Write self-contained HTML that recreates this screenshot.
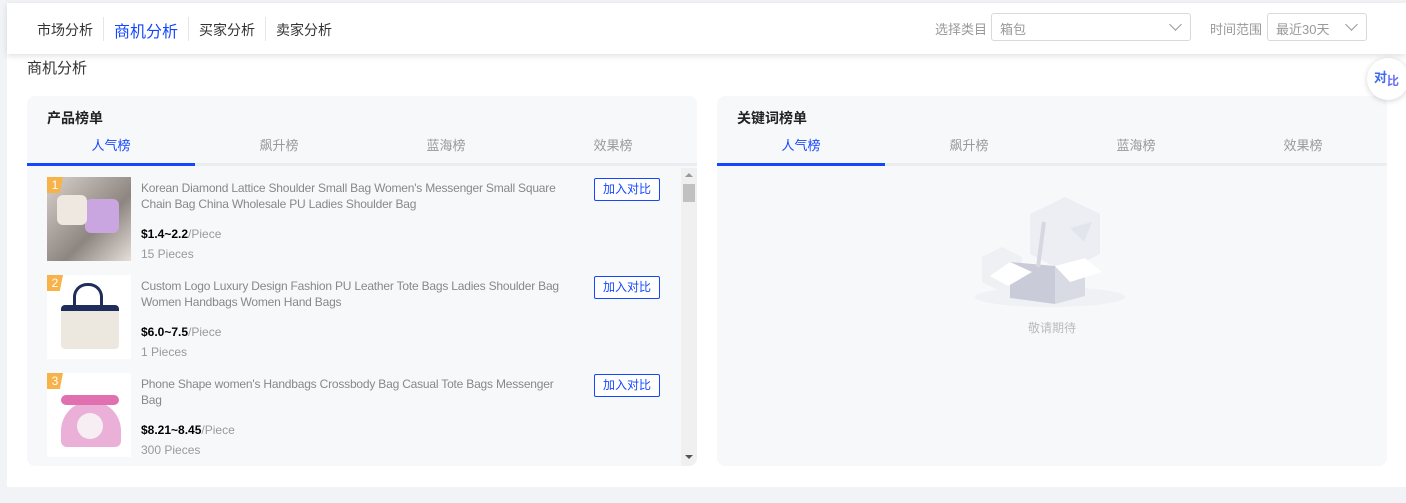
<!DOCTYPE html>
<html><head><meta charset="utf-8"><style>
*{margin:0;padding:0;box-sizing:border-box}
body{width:1406px;height:503px;background:#f2f3f6;font-family:"Liberation Sans","Noto Sans CJK SC",sans-serif;position:relative;overflow:hidden;color:#333}
.abs{position:absolute}
.hdr{left:7px;top:3px;width:1399px;height:51px;background:#fff;box-shadow:0 2px 6px rgba(0,0,0,.12);z-index:2}
.main{left:7px;top:54px;width:1399px;height:433px;background:#fff}
.nav{font-size:14px;color:#333;top:17px}
.sep{width:1px;height:24px;background:#e6e6e6;top:14px}
.lbl{font-size:13px;color:#999;top:16px}
.sel{top:10px;height:28px;border:1px solid #d9d9d9;border-radius:3px;font-size:13px;color:#999;padding:5px 8px;background:#fff}
.chev{position:absolute;right:10px;top:6px;width:9px;height:9px;border-right:1px solid #999;border-bottom:1px solid #999;transform:rotate(45deg)}
.panel{top:96px;width:670px;height:370px;background:#f7f8fa;border-radius:8px;overflow:hidden}
.ptitle{left:20px;top:12px;font-size:14px;font-weight:bold;color:#222}
.tab{top:39px;width:168px;text-align:center;font-size:13px;color:#999}
.tline{left:0;top:67px;width:100%;height:3px;background:#ecedf0}
.tact{left:0;top:67px;width:168px;height:3px;background:#1447ff}
.item{left:20px;width:640px;height:98px}
.img{left:0;top:0;width:84px;height:84px;background:#fff;overflow:hidden}
.rank{left:0;top:0;width:16px;height:16px;background:#f7b24a;color:#fff;font-size:12px;text-align:center;line-height:16px;clip-path:polygon(0 0,100% 0,80% 100%,0 100%)}
.t{left:94px;top:3px;width:425px;font-size:12px;line-height:16px;color:#888;letter-spacing:-0.2px}
.pr{left:94px;top:50px;font-size:12px;color:#000}
.pr span{color:#999}
.pc{left:94px;top:70px;font-size:12px;color:#999}
.btn{left:547px;top:1px;width:66px;height:23px;border:1px solid #1447ff;border-radius:2px;font-size:12px;color:#1447ff;text-align:center;line-height:21px;background:#fff}
</style></head><body>
<div class="abs hdr">
 <div class="abs nav" style="left:30px">市场分析</div>
 <div class="abs sep" style="left:96px"></div>
 <div class="abs nav" style="left:107px;top:15px;font-size:16px;color:#1447ff">商机分析</div>
 <div class="abs sep" style="left:181px"></div>
 <div class="abs nav" style="left:192px">买家分析</div>
 <div class="abs sep" style="left:258px"></div>
 <div class="abs nav" style="left:269px">卖家分析</div>
 <div class="abs lbl" style="left:928px">选择类目</div>
 <div class="abs sel" style="left:984px;width:200px">箱包<i class="chev"></i></div>
 <div class="abs lbl" style="left:1203px">时间范围</div>
 <div class="abs sel" style="left:1260px;width:100px">最近30天<i class="chev"></i></div>
</div>
<div class="abs main"></div>
<div class="abs" style="left:27px;top:57px;font-size:15px;color:#333">商机分析</div>
<div class="abs" style="left:1367px;top:58px;width:42px;height:42px;border-radius:50%;background:#fff;box-shadow:0 1px 6px rgba(0,0,0,.18);z-index:3;font-size:13px;font-weight:bold;color:#3d6bf0;padding:9px 0 0 7px">对<span style="font-size:12px;color:#6a6ff0;position:relative;top:3px">比</span></div>

<div class="abs panel" style="left:27px">
 <div class="abs ptitle">产品榜单</div>
 <div class="abs tab" style="left:0;color:#1447ff">人气榜</div>
 <div class="abs tab" style="left:168px">飙升榜</div>
 <div class="abs tab" style="left:335px">蓝海榜</div>
 <div class="abs tab" style="left:502px">效果榜</div>
 <div class="abs tline"></div><div class="abs tact"></div>
 <div class="abs" style="left:654px;top:72px;width:16px;height:298px;background:#f0f0f0"></div>
 <div class="abs" style="left:656px;top:88px;width:12px;height:18px;background:#c1c1c1"></div>
 <div class="abs" style="left:658px;top:77px;border:4px solid transparent;border-bottom-color:#999;border-top:0"></div>
 <div class="abs" style="left:658px;top:359px;border:4px solid transparent;border-top-color:#555;border-bottom:0"></div>

 <div class="abs item" style="top:81px">
  <div class="abs img" style="background:linear-gradient(135deg,#d9d2cc,#8d8580 60%,#e6dfd9)"><div class="abs" style="left:38px;top:22px;width:34px;height:34px;background:#c9a6e0;border-radius:6px"></div><div class="abs" style="left:10px;top:18px;width:30px;height:30px;background:#eee8e0;border-radius:6px"></div></div>
  <div class="abs rank">1</div>
  <div class="abs t">Korean Diamond Lattice Shoulder Small Bag Women's Messenger Small Square Chain Bag China Wholesale PU Ladies Shoulder Bag</div>
  <div class="abs pr"><b>$1.4~2.2</b><span>/Piece</span></div>
  <div class="abs pc">15 Pieces</div>
  <div class="abs btn">加入对比</div>
 </div>
 <div class="abs item" style="top:179px">
  <div class="abs img"><div class="abs" style="left:14px;top:30px;width:58px;height:44px;background:#ece8e0;border-radius:4px;border-top:6px solid #1f2d5a"></div><div class="abs" style="left:26px;top:8px;width:30px;height:26px;border:3px solid #1f2d5a;border-bottom:0;border-radius:14px 14px 0 0"></div></div>
  <div class="abs rank">2</div>
  <div class="abs t">Custom Logo Luxury Design Fashion PU Leather Tote Bags Ladies Shoulder Bag Women Handbags Women Hand Bags</div>
  <div class="abs pr"><b>$6.0~7.5</b><span>/Piece</span></div>
  <div class="abs pc">1 Pieces</div>
  <div class="abs btn">加入对比</div>
 </div>
 <div class="abs item" style="top:277px">
  <div class="abs img"><div class="abs" style="left:14px;top:28px;width:60px;height:46px;background:#eab0d8;border-radius:30px 30px 6px 6px"></div><div class="abs" style="left:30px;top:40px;width:26px;height:26px;background:#f6eef2;border-radius:50%"></div><div class="abs" style="left:14px;top:22px;width:58px;height:10px;background:#e070b0;border-radius:5px"></div></div>
  <div class="abs rank">3</div>
  <div class="abs t">Phone Shape women's Handbags Crossbody Bag Casual Tote Bags Messenger Bag</div>
  <div class="abs pr"><b>$8.21~8.45</b><span>/Piece</span></div>
  <div class="abs pc">300 Pieces</div>
  <div class="abs btn">加入对比</div>
 </div>
</div>

<div class="abs panel" style="left:717px">
 <div class="abs ptitle">关键词榜单</div>
 <div class="abs tab" style="left:0;color:#1447ff">人气榜</div>
 <div class="abs tab" style="left:168px">飙升榜</div>
 <div class="abs tab" style="left:335px">蓝海榜</div>
 <div class="abs tab" style="left:502px">效果榜</div>
 <div class="abs tline"></div><div class="abs tact"></div>
 <svg class="abs" style="left:243px;top:96px" width="180" height="120" viewBox="0 0 180 120">
  <polygon points="105,5 140,22 140,62 105,80 70,62 70,22" fill="#eceef3"/>
  <polygon points="42,55 62,65 62,90 42,100 22,90 22,65" fill="#eff0f4"/>
  <ellipse cx="90" cy="105" rx="75" ry="10" fill="#f0f1f5"/>
  <polygon points="50,70 95,74 95,112 50,106" fill="#c9ccd8"/>
  <polygon points="95,74 125,66 125,104 95,112" fill="#d8dbe4"/>
  <polygon points="50,70 30,84 48,94 72,80" fill="#fff"/>
  <polygon points="95,74 125,66 142,80 110,90" fill="#fff"/>
  <line x1="78" y1="75" x2="84" y2="30" stroke="#d5d8e0" stroke-width="4"/>
  <path d="M110 36 L132 30 L124 50 Z" fill="#e3e5ec"/>
 </svg>
 <div class="abs" style="left:0;width:670px;top:223px;text-align:center;font-size:12px;color:#bbb">敬请期待</div>
</div>
</body></html>
